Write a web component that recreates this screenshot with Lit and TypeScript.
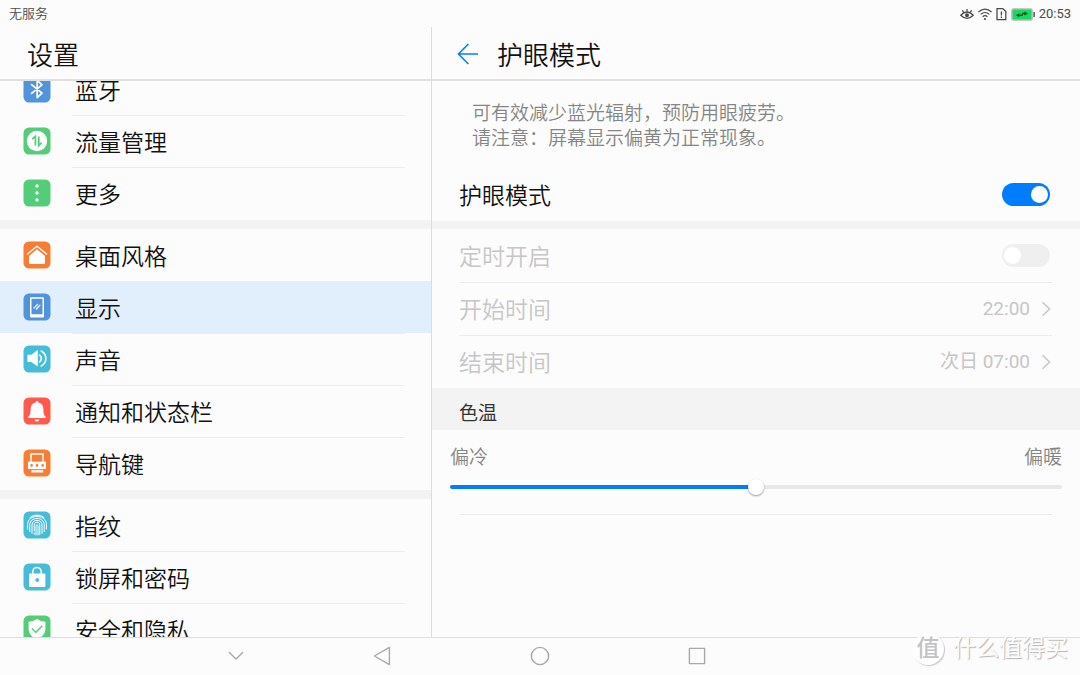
import { LitElement, html, svg, css, TemplateResult } from "lit";
import { customElement, property, state, query } from "lit/decorators.js";
import { classMap } from "lit/directives/class-map.js";
import { styleMap } from "lit/directives/style-map.js";

const BLUE = "#5294dc";
const GREEN = "#54cd78";
const ORANGE = "#f67d33";
const CYAN = "#46bcd9";
const RED = "#ff5a4c";

interface Entry {
  icon: string;
  label: string;
}

const GROUPS: Entry[][] = [
  [
    { icon: "bluetooth", label: "蓝牙" },
    { icon: "data", label: "流量管理" },
    { icon: "more", label: "更多" },
  ],
  [
    { icon: "home", label: "桌面风格" },
    { icon: "display", label: "显示" },
    { icon: "sound", label: "声音" },
    { icon: "bell", label: "通知和状态栏" },
    { icon: "navkey", label: "导航键" },
  ],
  [
    { icon: "finger", label: "指纹" },
    { icon: "lock", label: "锁屏和密码" },
    { icon: "shield", label: "安全和隐私" },
  ],
];

const ICONS: Record<string, { color: string; art: TemplateResult }> = {
  bluetooth: {
    color: BLUE,
    art: svg`<path d="M8.6 9.6 L19 18.2 L14.2 22.6 V5.4 L19 9.8 L8.6 18.4" fill="none" stroke="#fff" stroke-width="1.7" stroke-linejoin="round" stroke-linecap="round"/>`,
  },
  data: {
    color: GREEN,
    art: svg`<circle cx="14" cy="14" r="10.2" fill="#fff"/>
      <path d="M9.2 12.2 L12.4 9.4 V18.6 M15.8 9.4 V18.6 L18.6 15.6" fill="none" stroke="#54cd78" stroke-width="1.7"/>`,
  },
  more: {
    color: GREEN,
    art: svg`<circle cx="14" cy="7" r="1.7" fill="#fff"/><circle cx="14" cy="14" r="1.7" fill="#fff"/><circle cx="14" cy="21" r="1.7" fill="#fff"/>`,
  },
  home: {
    color: ORANGE,
    art: svg`<path d="M4.4 13 L14 5.2 L23.6 13" fill="none" stroke="#fff" stroke-width="1.3" stroke-linecap="round" stroke-linejoin="round"/>
      <path d="M14 8.2 L22 14.9 V22.2 Q22 23 21.2 23 H6.8 Q6 23 6 22.2 V14.9 Z" fill="#fff"/>`,
  },
  display: {
    color: BLUE,
    art: svg`<path fill-rule="evenodd" d="M8 4.2 H20 Q21 4.2 21 5.2 V23.4 Q21 24.4 20 24.4 H8 Q7 24.4 7 23.4 V5.2 Q7 4.2 8 4.2 Z M8.5 5.8 V21.2 H19.5 V5.8 Z" fill="#fff"/>
      <path d="M11 15.2 L14.6 11.4 M13.4 16 L17 12.2" stroke="#fff" stroke-width="1.2" stroke-linecap="round"/>`,
  },
  sound: {
    color: CYAN,
    art: svg`<path d="M4.4 10.2 Q4.4 9.8 4.8 9.8 H8.4 L14 5.4 Q14.8 5 14.8 5.8 V20.6 Q14.8 21.4 14 21 L8.4 17 H4.8 Q4.4 17 4.4 16.6 Z" fill="#fff"/>
      <path d="M16.6 10.2 A4 4 0 0 1 16.6 16.8 M18.2 6 A8.4 8.4 0 0 1 18.2 21" fill="none" stroke="#fff" stroke-width="1.6" stroke-linecap="round"/>`,
  },
  bell: {
    color: RED,
    art: svg`<path d="M14 4 C14.9 4 15.3 4.6 15.4 5.5 C18.6 6.2 20.4 8.6 20.4 12 C20.4 16.4 20.8 18.2 22.6 19.6 Q23.2 21 22 21 H6 Q4.8 21 5.4 19.6 C7.2 18.2 7.6 16.4 7.6 12 C7.6 8.6 9.4 6.2 12.6 5.5 C12.7 4.6 13.1 4 14 4 Z M11.6 22.4 H16.4 Q15.8 24.6 14 24.6 Q12.2 24.6 11.6 22.4 Z" fill="#fff"/>`,
  },
  navkey: {
    color: ORANGE,
    art: svg`<path d="M8 13 V5 H20 V13" fill="none" stroke="#fff" stroke-width="1.5"/>
      <path fill-rule="evenodd" d="M5 12.6 H23 V20 H5 Z" fill="#fff"/>
      <circle cx="8.6" cy="16.4" r="1.3" fill="#f67d33"/><circle cx="14" cy="16.4" r="1.3" fill="#f67d33"/><circle cx="19.6" cy="16.4" r="1.3" fill="#f67d33"/>
      <path d="M8 20.8 H20.4 V23.8 H8 Z" fill="#fff" stroke="#f67d33" stroke-width="0.6"/>`,
  },
  finger: {
    color: CYAN,
    art: svg`<g fill="none" stroke="#fff" stroke-width="1" stroke-linecap="round">
      <path d="M7 6.6 C10.8 3.2 17.2 3.2 21 6.6"/>
      <path d="M4.6 18 V13.6 C4.6 2.8 23.4 2.8 23.4 13.6 V18"/>
      <path d="M6.8 20.6 V13.8 C6.8 5.4 21.2 5.4 21.2 13.8 V20.6"/>
      <path d="M9 22.4 V14 C9 7.8 19 7.8 19 14 V22.4"/>
      <path d="M11.2 20 V14.2 C11.2 10.2 16.8 10.2 16.8 14.2 V23.4"/>
      <path d="M11.2 22 V23.2"/>
      <path d="M13 24 V14.6 Q14 12.8 15 14.6 V24"/></g>`,
  },
  lock: {
    color: CYAN,
    art: svg`<path d="M9.8 11 V8.8 A4.2 4.2 0 0 1 18.2 8.8 V11" fill="none" stroke="#fff" stroke-width="1.5"/>
      <rect x="6" y="10.4" width="16.4" height="13.6" rx="1" fill="#fff"/><circle cx="14.2" cy="17" r="1.9" fill="#46bcd9"/>`,
  },
  shield: {
    color: GREEN,
    art: svg`<path d="M14 4 Q17.6 6.6 22.4 6.8 V14 Q22.4 20.6 14 24.4 Q5.6 20.6 5.6 14 V6.8 Q10.4 6.6 14 4 Z" fill="#fff"/>
      <path d="M8.8 13.4 L12.8 17.2 L19.4 10.8" fill="none" stroke="#54cd78" stroke-width="1.4"/>`,
  },
};

const base = css`
  * {
    box-sizing: border-box;
  }
  h1,
  h2,
  p,
  ul {
    margin: 0;
    padding: 0;
    font-weight: inherit;
  }
  svg {
    display: block;
    flex: none;
  }
`;

@customElement("status-bar")
export class StatusBar extends LitElement {
  static styles = [
    base,
    css`
      :host {
        display: flex;
        justify-content: space-between;
        align-items: center;
        height: 27px;
        padding: 0 9px;
        font-size: 13px;
        line-height: 20px;
        color: #4a4a4a;
      }
      .tray {
        display: flex;
        align-items: center;
        gap: 4px;
        font-weight: 400;
      }
    `,
  ];

  render() {
    return html`
      <span>无服务</span>
      <div class="tray">
        <svg width="14" height="14" viewBox="0 0 14 14" fill="none" stroke="#4a4a4a" stroke-width="1.3">
          <path d="M0.8 8.2 Q7 1.8 13.2 8.2 Q7 14.6 0.8 8.2 Z" />
          <circle cx="7" cy="8.2" r="2" fill="#4a4a4a" stroke="none" />
          <path d="M7 4.6 V2 M3.6 5.4 L2.4 3.2 M10.4 5.4 L11.6 3.2" />
        </svg>
        <svg width="14" height="14" viewBox="0 0 14 14" fill="none" stroke="#4a4a4a" stroke-width="1.2">
          <path d="M0.4 5 Q7 -0.6 13.6 5 M2.6 7.4 Q7 3.6 11.4 7.4 M4.6 9.8 Q7 7.6 9.4 9.8" />
          <circle cx="7" cy="12" r="1.1" fill="#4a4a4a" stroke="none" />
        </svg>
        <svg width="11" height="14" viewBox="0 0 11 14" fill="none" stroke="#4a4a4a" stroke-width="1.3">
          <path d="M1 1.6 H6.8 L9.8 4.6 V12.6 H1 Z M5.4 4.6 V8.6 M5.4 9.6 V11" />
        </svg>
        <svg width="24" height="14" viewBox="0 0 24 14">
          <rect x="1" y="2" width="20" height="11" rx="1.5" fill="#14dc5f" stroke="#b5b5b5" stroke-width="1.6" />
          <rect x="22.4" y="5" width="1.4" height="5" fill="#4a4a4a" />
          <path d="M4.6 8.2 L8.4 6.2 V7.6 H12 V8.8 H8.4 V10 Z M17 6.6 L13.4 4.6 V5.8 H11 V7.2 H13.4 V8.6 Z" fill="#24402c" />
        </svg>
        <time>20:53</time>
      </div>
    `;
  }
}

@customElement("settings-list")
export class SettingsList extends LitElement {
  @property() selected = "";
  @query(".scroller") scroller!: HTMLElement;

  static styles = [
    base,
    css`
      :host {
        display: flex;
        flex-direction: column;
        min-height: 0;
        border-right: 1px solid #dcdcdc;
      }
      .title {
        flex: none;
        height: 54px;
        padding-left: 27px;
        border-bottom: 2px solid #e0e0e0;
        font-size: 26px;
        line-height: 58px;
      }
      .scroller {
        flex: 1;
        min-height: 0;
        overflow-y: auto;
        scrollbar-width: none;
      }
      .group {
        list-style: none;
        padding-bottom: 1px;
      }
      .group + .group {
        border-top: 9px solid #f3f3f3;
      }
      .row {
        display: grid;
        grid-template-columns: 28px 1fr;
        column-gap: 21px;
        align-items: center;
        height: 52px;
        padding: 0 26px 0 23px;
        color: #111;
        text-decoration: none;
      }
      .row.on {
        background: #e1effd;
      }
      .label {
        height: 52px;
        padding: 2px 0 0 3px;
        border-top: 1px solid transparent;
        font-size: 23px;
        line-height: 51px;
        white-space: nowrap;
      }
      li + li .label {
        border-top-color: #ececec;
      }
      li + li .on .label {
        border-top-color: transparent;
      }
    `,
  ];

  firstUpdated() {
    this.scroller.scrollTop = 18;
  }

  render() {
    return html`
      <h1 class="title">设置</h1>
      <nav class="scroller">
        ${GROUPS.map(
          (group) => html`<ul class="group">
            ${group.map(
              (e) => html`<li>
                <a class=${classMap({ row: true, on: e.label === this.selected })} href="#${e.icon}">
                  <svg width="28" height="28" viewBox="0 0 28 28">
                    <rect x="0.5" y="0.5" width="27" height="27" rx="5.5" fill=${ICONS[e.icon].color} />
                    ${ICONS[e.icon].art}
                  </svg>
                  <span class="label">${e.label}</span>
                </a>
              </li>`
            )}
          </ul>`
        )}
      </nav>
    `;
  }
}

@customElement("eye-comfort")
export class EyeComfort extends LitElement {
  @state() private warmth = 50;
  @state() private enabled = true;

  static styles = [
    base,
    css`
      :host {
        display: flex;
        flex-direction: column;
        min-height: 0;
      }
      button,
      input {
        margin: 0;
        font: inherit;
      }
      .head {
        display: flex;
        align-items: center;
        flex: none;
        gap: 18px;
        height: 54px;
        padding: 2px 0 0 25px;
        border-bottom: 2px solid #e0e0e0;
      }
      .back {
        padding: 0;
        border: 0;
        background: none;
      }
      .title {
        padding-top: 4px;
        font-size: 26px;
        line-height: 40px;
      }
      .note {
        padding: 20px 40px 17px;
        font-size: 19px;
        line-height: 25px;
        color: #858585;
      }
      .row {
        display: flex;
        justify-content: space-between;
        align-items: center;
        width: 100%;
        height: 53px;
        padding: 0 2px 0 0;
        border: 0;
        background: none;
        font-size: 23px;
        line-height: 48px;
        color: #111;
        text-align: left;
      }
      button.row {
        padding-right: 1px;
      }
      .name {
        padding-top: 4px;
      }
      .block {
        padding: 0 28px 0 27px;
      }
      .timing {
        border-top: 8px solid #f3f3f3;
      }
      .timing .row {
        color: #c6c6c6;
      }
      .timing .row + .row {
        border-top: 1px solid #ececec;
      }
      .value {
        display: flex;
        align-items: center;
        gap: 11px;
        font-size: 19px;
        font-weight: 400;
      }
      .switch {
        display: flex;
        appearance: none;
        width: 48px;
        height: 23px;
        padding: 3px 2px;
        border-radius: 12px;
        background: #efefef;
      }
      .switch::before {
        content: "";
        width: 17px;
        height: 17px;
        border-radius: 50%;
        background: #fff;
      }
      .switch:checked {
        justify-content: flex-end;
        background: #007dff;
      }
      .section {
        padding: 10px 27px 0;
        background: #f3f3f3;
        font-size: 19px;
        line-height: 32px;
        font-weight: 400;
        color: #333;
      }
      .temp {
        padding: 15px 18px 0;
      }
      .ends {
        display: flex;
        justify-content: space-between;
        font-size: 19px;
        line-height: 26px;
        color: #858585;
      }
      .slider {
        display: block;
        appearance: none;
        width: 100%;
        height: 20px;
        margin-top: 6px;
        background: none;
      }
      .slider::-webkit-slider-runnable-track {
        height: 4px;
        border-radius: 2px;
        background: linear-gradient(#007dff, #007dff) 0 / var(--fill) 100% no-repeat #e8e8e8;
      }
      .slider::-webkit-slider-thumb {
        appearance: none;
        width: 16px;
        height: 16px;
        margin-top: -6px;
        border-radius: 50%;
        background: #fff;
        box-shadow: 0 1px 2px rgba(0, 0, 0, 0.4);
      }
      .rule {
        height: 1px;
        margin: 17px 28px 0 27px;
        border: 0;
        background: #ececec;
      }
    `,
  ];

  private chevron() {
    return html`<svg width="10" height="16" viewBox="0 0 10 16" fill="none" stroke="#c6c6c6" stroke-width="1.5">
      <path d="M1.5 1.2 L8.6 8 L1.5 14.8" />
    </svg>`;
  }

  render() {
    return html`
      <header class="head">
        <button class="back" aria-label="返回">
          <svg width="22" height="22" viewBox="0 0 22 22" fill="none" stroke="#007dff" stroke-width="1.6" stroke-linejoin="round">
            <path d="M11.4 1 L1.4 11 L11.4 21 M1.4 11 H21" />
          </svg>
        </button>
        <h1 class="title">护眼模式</h1>
      </header>
      <p class="note">可有效减少蓝光辐射，预防用眼疲劳。<br />请注意：屏幕显示偏黄为正常现象。</p>
      <div class="block">
        <div class="row">
          <label class="name" for="mode">护眼模式</label>
          <input
            class="switch"
            id="mode"
            type="checkbox"
            role="switch"
            .checked=${this.enabled}
            @change=${(e: Event) => (this.enabled = (e.target as HTMLInputElement).checked)}
          />
        </div>
      </div>
      <div class="block timing">
        <div class="row">
          <label class="name" for="timer">定时开启</label>
          <input class="switch" id="timer" type="checkbox" role="switch" disabled />
        </div>
        <button class="row" disabled>
          <span class="name">开始时间</span><span class="value">22:00 ${this.chevron()}</span>
        </button>
        <button class="row" disabled>
          <span class="name">结束时间</span><span class="value">次日 07:00 ${this.chevron()}</span>
        </button>
      </div>
      <h2 class="section" id="temp-title">色温</h2>
      <div class="temp">
        <div class="ends"><span>偏冷</span><span>偏暖</span></div>
        <input
          class="slider"
          type="range"
          min="0"
          max="100"
          aria-labelledby="temp-title"
          .value=${String(this.warmth)}
          style=${styleMap({ "--fill": `${this.warmth}%` })}
          @input=${(e: Event) => (this.warmth = Number((e.target as HTMLInputElement).value))}
        />
      </div>
      <hr class="rule" />
    `;
  }
}

@customElement("nav-keys")
export class NavKeys extends LitElement {
  static styles = [
    base,
    css`
      :host {
        display: grid;
        grid-template-columns: 163fr 146fr 146fr 170fr 144fr 311fr;
        height: 38px;
        border-top: 1px solid #dedede;
      }
      .key {
        display: flex;
        justify-content: center;
        align-items: center;
        padding: 0 0 2px;
        border: 0;
        background: none;
      }
      .key:first-of-type {
        grid-column: 2;
      }
    `,
  ];

  private key(name: string, art: TemplateResult) {
    return html`<button class="key" aria-label=${name}>
      <svg width="20" height="20" viewBox="0 0 20 20" fill="none" stroke="#a9a9a9" stroke-width="1.4" stroke-linejoin="round" stroke-linecap="round">
        ${art}
      </svg>
    </button>`;
  }

  render() {
    return html`
      ${this.key("隐藏", svg`<path d="M3.4 6.4 L10 13 L16.6 6.4"/>`)}
      ${this.key("返回", svg`<path d="M2.4 10 L17.4 1.4 V18.6 Z"/>`)}
      ${this.key("主屏幕", svg`<circle cx="10" cy="10" r="8.6"/>`)}
      ${this.key("最近任务", svg`<rect x="2.4" y="2.4" width="15.2" height="15.2"/>`)}
    `;
  }
}

@customElement("app-root")
export class AppRoot extends LitElement {
  static styles = [
    base,
    css`
      :host {
        position: relative;
        display: flex;
        flex-direction: column;
        height: 100vh;
        overflow: hidden;
        background: #fcfcfc;
        color: #111;
        font-family: Roboto, "Noto Sans CJK SC", sans-serif;
        font-weight: 350;
      }
      status-bar {
        flex: none;
      }
      .panes {
        flex: 1;
        display: grid;
        grid-template-columns: 2fr 3fr;
        grid-template-rows: minmax(0, 1fr);
        min-height: 0;
      }
      nav-keys {
        flex: none;
      }
      .mark {
        position: absolute;
        right: 12px;
        bottom: 10px;
        display: flex;
        align-items: center;
        gap: 9px;
        font-size: 23px;
        font-weight: 400;
        line-height: 32px;
        color: #fcfcfc;
        text-shadow: 1px 1px 1px #b4b4b4;
        pointer-events: none;
      }
      .seal {
        width: 32px;
        border-radius: 50%;
        background: #fff;
        box-shadow: 1px 1px 1px #c8c8c8;
        font-weight: 500;
        text-align: center;
        color: #c2c2c2;
        text-shadow: none;
      }
    `,
  ];

  render() {
    return html`
      <status-bar></status-bar>
      <div class="panes">
        <settings-list selected="显示"></settings-list>
        <eye-comfort></eye-comfort>
      </div>
      <nav-keys></nav-keys>
      <div class="mark"><span class="seal">值</span><span>什么值得买</span></div>
    `;
  }
}
